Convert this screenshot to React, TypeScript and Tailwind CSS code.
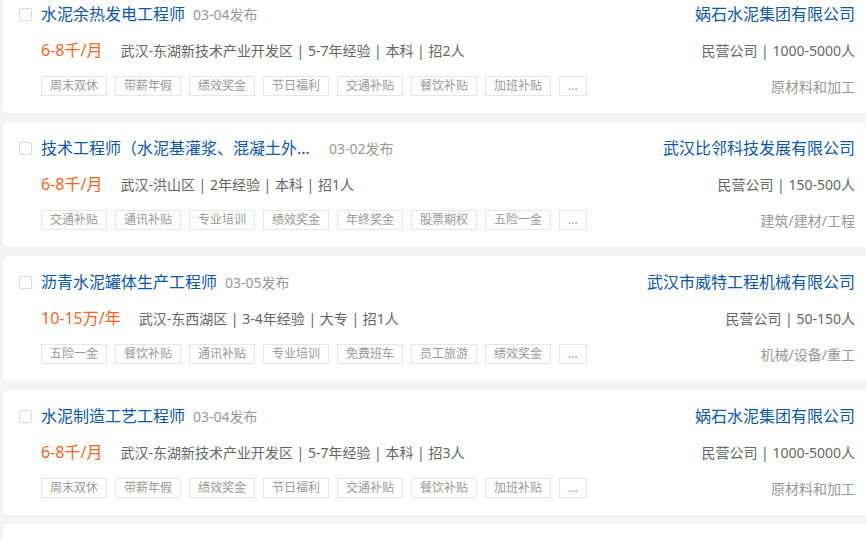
import React from "react";

interface Job {
  id: string;
  title: string;
  date: string;
  salary: string;
  info: string[];
  company: string;
  companyInfo: string;
  tags: string[];
  industry: string;
}

const jobs: Job[] = [
  {
    id: "1",
    title: "水泥余热发电工程师",
    date: "03-04发布",
    salary: "6-8千/月",
    info: ["武汉-东湖新技术产业开发区", "5-7年经验", "本科", "招2人"],
    company: "娲石水泥集团有限公司",
    companyInfo: "民营公司 | 1000-5000人",
    tags: ["周末双休", "带薪年假", "绩效奖金", "节日福利", "交通补贴", "餐饮补贴", "加班补贴"],
    industry: "原材料和加工",
  },
  {
    id: "2",
    title: "技术工程师（水泥基灌浆、混凝土外加剂）",
    date: "03-02发布",
    salary: "6-8千/月",
    info: ["武汉-洪山区", "2年经验", "本科", "招1人"],
    company: "武汉比邻科技发展有限公司",
    companyInfo: "民营公司 | 150-500人",
    tags: ["交通补贴", "通讯补贴", "专业培训", "绩效奖金", "年终奖金", "股票期权", "五险一金"],
    industry: "建筑/建材/工程",
  },
  {
    id: "3",
    title: "沥青水泥罐体生产工程师",
    date: "03-05发布",
    salary: "10-15万/年",
    info: ["武汉-东西湖区", "3-4年经验", "大专", "招1人"],
    company: "武汉市威特工程机械有限公司",
    companyInfo: "民营公司 | 50-150人",
    tags: ["五险一金", "餐饮补贴", "通讯补贴", "专业培训", "免费班车", "员工旅游", "绩效奖金"],
    industry: "机械/设备/重工",
  },
  {
    id: "4",
    title: "水泥制造工艺工程师",
    date: "03-04发布",
    salary: "6-8千/月",
    info: ["武汉-东湖新技术产业开发区", "5-7年经验", "本科", "招3人"],
    company: "娲石水泥集团有限公司",
    companyInfo: "民营公司 | 1000-5000人",
    tags: ["周末双休", "带薪年假", "绩效奖金", "节日福利", "交通补贴", "餐饮补贴", "加班补贴"],
    industry: "原材料和加工",
  },
];

const Tag: React.FC<{ children: React.ReactNode }> = ({ children }) => (
  <span className="flex h-[20px] items-center border border-[#e6e6e6] px-[8px] text-[12px] leading-none text-[#999]">
    {children}
  </span>
);

const JobCard: React.FC<{ job: Job }> = ({ job }) => (
  <div className="ml-[3px] h-[125px] w-[873px] shrink-0 rounded-[5px] bg-white pl-[16px] pr-[21px] pt-[16px]">
    <div className="flex h-[20px] items-center justify-between">
      <div className="flex items-center">
        <span className="h-[13px] w-[13px] rounded-[2px] border border-[#d9d9d9] bg-white" />
        <span className="ml-[9px] max-w-[280px] truncate text-[16px] leading-[20px] text-[#0c57a7]">
          {job.title}
        </span>
        <span className="ml-[8px] text-[14px] text-[#999]">{job.date}</span>
      </div>
      <span className="text-[16px] leading-[20px] text-[#0c57a7]">{job.company}</span>
    </div>

    <div className="mt-[16px] flex h-[20px] items-center justify-between pl-[22px]">
      <div className="flex items-center">
        <span className="text-[16px] text-[#fa6420]">{job.salary}</span>
        <span className="ml-[18px] text-[14px] text-[#666]">{job.info.join(" | ")}</span>
      </div>
      <span className="text-[14px] text-[#666]">{job.companyInfo}</span>
    </div>

    <div className="mt-[16px] flex h-[20px] items-center justify-between pl-[22px]">
      <div className="flex gap-[8px]">
        {job.tags.map((t) => (
          <Tag key={t}>{t}</Tag>
        ))}
        <Tag>...</Tag>
      </div>
      <span className="text-[14px] text-[#999]">{job.industry}</span>
    </div>
  </div>
);

export default function App() {
  return (
    <div
      className="h-[540px] w-[866px] overflow-hidden bg-[#f4f4f4]"
      style={{ fontFamily: '"Noto Sans", "Noto Sans CJK SC", sans-serif' }}
    >
      <div className="-mt-[12px] flex flex-col gap-[9px]">
        {jobs.map((job) => (
          <JobCard key={job.id} job={job} />
        ))}
        <div className="ml-[3px] h-[125px] w-[873px] shrink-0 rounded-[5px] bg-white" />
      </div>
    </div>
  );
}
